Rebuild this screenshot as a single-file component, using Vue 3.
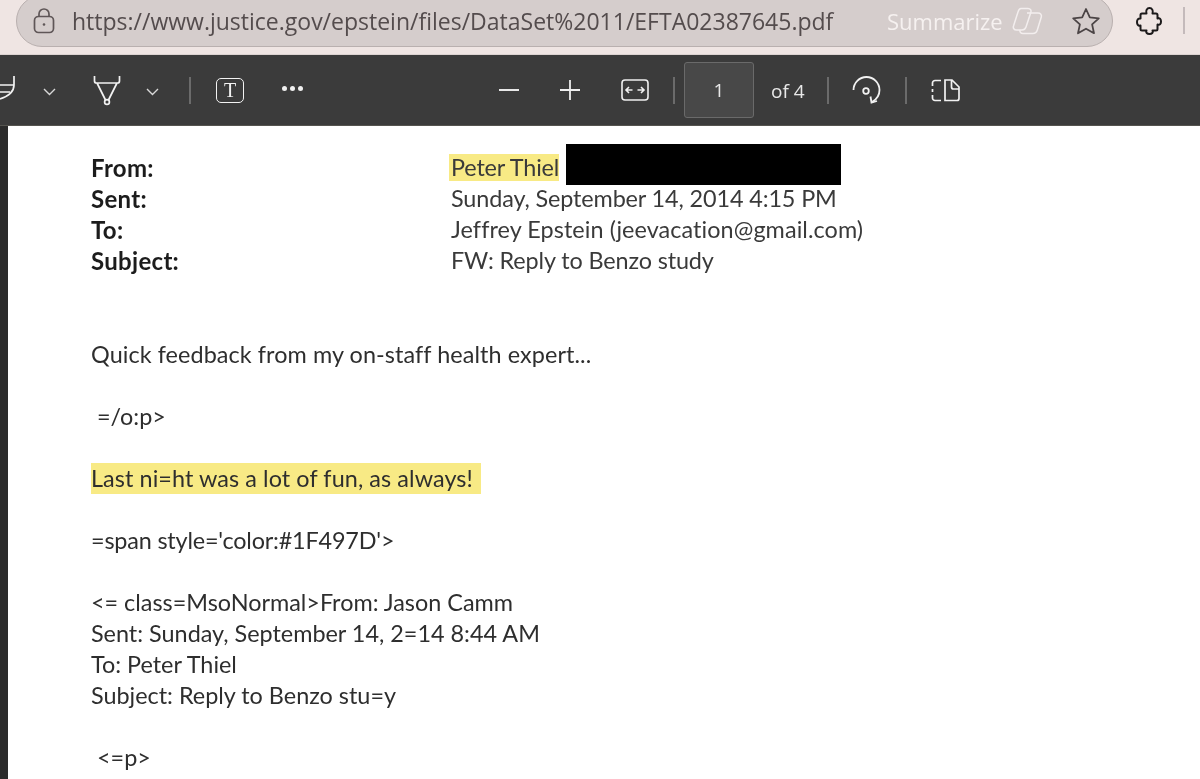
<template>
  <div class="page">
    <header class="browser-bar">
      <div class="address-pill">
        <svg class="lock" width="22" height="26" viewBox="0 0 22 26" fill="none" stroke="#5f5657" stroke-width="1.7">
          <rect x="1.5" y="8.5" width="19" height="16" rx="4" />
          <path d="M6 8.5V6a5 5 0 0 1 10 0v2.500" />
          <circle cx="11" cy="16.500" r="1.300" fill="#5f5657" stroke="none" />
        </svg>
        <span class="url">https://www.justice.gov/epstein/files/DataSet%2011/EFTA02387645.pdf</span>
        <span class="summarize">Summarize</span>
        <svg class="copilot" width="31" height="28" viewBox="0 0 31 28" fill="none" stroke="#f3eeee" stroke-width="1.500" stroke-linejoin="round">
          <path d="M9 1.500h7c2.500 0 3.500 1.800 2.800 4L14 20c-.7 2-2 3-4 3H4.500C2 23 .8 21 1.500 19L6 5c.6-2 1.500-3.500 3-3.500z" />
          <path d="M15 6h11c2.500 0 4 1.800 3.300 4l-4 13c-.7 2.500-2.200 3.500-4.500 3.500H11c-2.200 0-3.500-1.500-3-3.500" />
        </svg>
        <svg class="star" width="30" height="28" viewBox="0 0 30 28" fill="none" stroke="#4b4445" stroke-width="1.800" stroke-linejoin="round">
          <path d="M15 2l3.800 8.300 9 1-6.700 6.100 1.900 8.800L15 21.700l-8 4.500 1.900-8.800L2.200 11.300l9-1z" />
        </svg>
      </div>
      <svg class="puzzle" width="26" height="28" viewBox="0 0 26 28" fill="none" stroke="#1c1a1b" stroke-width="2" stroke-linejoin="round">
        <path d="M6 6.500h4.500c-1-3 .5-5.500 3-5.500s4 2.500 3 5.500H20a1.500 1.500 0 0 1 1.500 1.500v3.500c2.500-1 3.500 1 3.500 3s-1 4-3.500 3V22a1.500 1.500 0 0 1-1.500 1.500h-3.500c1 2-.5 3.500-3 3.500s-4-1.500-3-3.500H6A1.500 1.500 0 0 1 4.500 22v-3.500C2 19.500 1 17 1 15s1-4 3.500-3.500V8A1.500 1.500 0 0 1 6 6.500z" />
      </svg>
      <div class="bar-sep" />
    </header>

    <nav class="pdf-toolbar">
      <svg class="draw" width="15" height="30" viewBox="0 0 15 30" fill="none" stroke="#f2f2f2" stroke-width="1.700">
        <path d="M14 1v9c0 7-5 11-14 14M0 10h14M0 17h10" />
      </svg>
      <svg class="chev chev-a" width="13" height="8" viewBox="0 0 13 8" fill="none" stroke="#d8d8d8" stroke-width="1.400"><path d="M1 1l5.500 5.500L12 1" /></svg>
      <svg class="marker" width="28" height="30" viewBox="0 0 28 30" fill="none" stroke="#f2f2f2" stroke-width="1.700" stroke-linejoin="round">
        <path d="M1.500 0v5q0 2 2 2h21q2 0 2-2V0M4 7l8.500 17M24 7l-8.500 17" />
        <circle cx="14" cy="26" r="2.400" />
      </svg>
      <svg class="chev chev-b" width="13" height="8" viewBox="0 0 13 8" fill="none" stroke="#d8d8d8" stroke-width="1.400"><path d="M1 1l5.500 5.500L12 1" /></svg>
      <div class="tool-sep sep-a" />
      <div class="text-tool"><span>T</span></div>
      <div class="dots"><i /><i /><i /></div>
      <svg class="minus" width="20" height="2" viewBox="0 0 20 2"><rect width="20" height="2" fill="#e8e8e8" /></svg>
      <svg class="plus" width="20" height="20" viewBox="0 0 20 20" fill="none" stroke="#f0f0f0" stroke-width="1.800"><path d="M10 0v20M0 10h20" /></svg>
      <svg class="fit" width="28" height="22" viewBox="0 0 28 22" fill="none" stroke="#f0f0f0" stroke-width="1.600">
        <rect x="1" y="1" width="26" height="20" rx="3" />
        <path d="M5.500 11h6M8 8l-3 3 3 3M16.500 11h6M20 8l3 3-3 3" />
      </svg>
      <div class="tool-sep sep-b" />
      <div class="page-box">1</div>
      <span class="page-total">of 4</span>
      <div class="tool-sep sep-c" />
      <svg class="rotate" width="30" height="30" viewBox="0 0 30 30" fill="none" stroke="#f2f2f2" stroke-width="1.800">
        <path d="M1.500 13A13 13 0 0 1 27.500 13c0 5-3 9.500-7.500 12" />
        <path d="M25 24l-5.500 1.500-1-6" />
        <circle cx="14" cy="14" r="2.800" />
      </svg>
      <div class="tool-sep sep-d" />
      <svg class="split" width="29" height="23" viewBox="0 0 29 23" fill="none" stroke="#f2f2f2" stroke-width="1.700">
        <path d="M10 1.500H4A2.500 2.500 0 0 0 1.500 4v3M1.500 10v3M1.500 16v3A2.500 2.500 0 0 0 4 21.500h6" />
        <path d="M14 1h7l7 7v11.500a2 2 0 0 1-2 2H14zM20.500 1v7a2 2 0 0 0 2 2H28" />
      </svg>
    </nav>

    <main class="doc-area">
      <div class="sheet">
        <div v-for="row in headers" :key="row.label" class="mail-row">
          <b class="mail-label">{{ row.label }}</b>
          <span v-if="row.label === 'From:'" class="mail-value">
            <mark class="name-mark">{{ row.value }}</mark>
            <span class="redaction" />
          </span>
          <span v-else class="mail-value" :style="{ letterSpacing: row.spacing }">{{ row.value }}</span>
        </div>

        <div class="body-text">
          <p class="wide">Quick feedback from my on-staff health expert...</p>
          <p class="indent">=/o:p&gt;</p>
          <p class="wide"><mark class="line-mark">Last ni=ht was a lot of fun, as always!</mark></p>
          <p class="narrow">=span style='color:#1F497D'&gt;</p>
          <p>&lt;= class=MsoNormal&gt;From: Jason Camm<br />Sent: Sunday, September 14, 2=14 8:44 AM<br />To: Peter Thiel<br />Subject: Reply to Benzo stu=y</p>
          <p class="indent">&lt;=p&gt;</p>
        </div>
      </div>
    </main>
  </div>
</template>

<script setup>
const headers = [
  { label: 'From:', value: 'Peter Thiel' },
  { label: 'Sent:', value: 'Sunday, September 14, 2014 4:15 PM', spacing: '-0.12px' },
  { label: 'To:', value: 'Jeffrey Epstein (jeevacation@gmail.com)', spacing: '0.08px' },
  { label: 'Subject:', value: 'FW: Reply to Benzo study', spacing: '-0.12px' }
]
</script>

<style>
html, body { margin: 0; height: 100%; overflow: hidden; background: #fff; }
</style>

<style scoped>
.page { width: 1200px; height: 779px; overflow: hidden; filter: blur(0.45px); font-family: "Lato", "Noto Sans", sans-serif; }

.browser-bar { height: 55px; background: #efe5e3; display: flex; align-items: flex-start; padding-left: 16px; box-sizing: border-box; border-bottom: 1px solid #dcd3d1; }
.address-pill {
  width: 1097px; height: 52px; margin-top: -5px; background: #d5cdcc; border: 1px solid #b9b0af; box-sizing: border-box;
  border-radius: 26px; display: flex; align-items: center;
}
.lock { margin-left: 16px; flex-shrink: 0; }
.url { margin-left: 17px; font-family: "Open Sans", sans-serif; font-size: 23px; color: #544c4d; white-space: nowrap; width: 760px; flex-shrink: 0; }
.summarize { margin-left: 55px; font-family: "Open Sans", sans-serif; font-size: 22px; color: #f6f1f0; white-space: nowrap; width: 117px; flex-shrink: 0; }
.copilot { margin-left: 8px; flex-shrink: 0; }
.star { margin-left: 28px; flex-shrink: 0; }
.puzzle { margin: 7px 0 0 23px; flex-shrink: 0; }
.bar-sep { width: 2px; height: 27px; background: #c4babb; margin: 7px 0 0 21px; }

.pdf-toolbar { height: 71px; background: #3b3b3b; display: flex; align-items: center; box-sizing: border-box; color: #eee; border-bottom: 1px solid #55544f; }
.pdf-toolbar svg { flex-shrink: 0; overflow: visible; }
.chev-a { margin-left: 28px; margin-top: 3px; }
.marker { margin-left: 37px; margin-top: 2px; }
.chev-b { margin-left: 25px; margin-top: 3px; }
.tool-sep { width: 2px; height: 27px; background: #6b6b6b; flex-shrink: 0; }
.sep-a { margin-left: 30px; }
.text-tool { margin-left: 25px; width: 28px; height: 25px; box-sizing: border-box; border: 1.6px solid #f2f2f2; border-radius: 5px; display: flex; align-items: center; justify-content: center; font-family: "Liberation Serif", serif; font-size: 20px; line-height: 1; color: #f2f2f2; }
.dots { margin-left: 38px; margin-top: -3px; display: flex; gap: 3px; }
.dots i { width: 5px; height: 5px; border-radius: 50%; background: #f0f0f0; display: block; }
.minus { margin-left: 196px; }
.plus { margin-left: 41px; }
.fit { margin-left: 41px; }
.sep-b { margin-left: 24px; }
.page-box { margin-left: 9px; width: 70px; height: 56px; box-sizing: border-box; background: #484848; border: 1.500px solid #6a6a6a; border-radius: 3px; display: flex; align-items: center; justify-content: center; font-family: "Open Sans", sans-serif; font-size: 19px; color: #e8e8e8; flex-shrink: 0; }
.page-total { margin-left: 17px; width: 38px; font-family: "Open Sans", sans-serif; font-size: 19px; color: #e8e8e8; white-space: nowrap; flex-shrink: 0; margin-top: 1px; }
.sep-c { margin-left: 18px; }
.rotate { margin-left: 23px; margin-top: 4px; }
.sep-d { margin-left: 23px; }
.split { margin-left: 24px; }

.doc-area { background: #2b2b2b; height: 653px; padding-left: 8px; }
.sheet { background: #fff; height: 100%; box-sizing: border-box; padding: 26px 0 0 83px; color: #2e2e2e; font-size: 23.400px; line-height: 31px; }
.mail-row { display: flex; height: 31px; white-space: nowrap; }
.mail-label { width: 360px; font-weight: 700; font-size: 24px; letter-spacing: 0.3px; color: #1c1c1c; flex-shrink: 0; }
.mail-value { display: flex; align-items: center; color: #3a3a3a; }
.name-mark { background: #f8ea85; color: #3a3a3a; padding: 0 0 0 2px; margin-left: -2px; height: 27px; line-height: 27px; letter-spacing: -0.15px; }
.redaction { width: 275px; height: 41px; background: #000; margin-left: 7px; margin-top: -6px; }

.body-text { margin-top: 63px; }
.body-text p { margin: 0 0 31px; }
.indent { padding-left: 6px; }
.wide { letter-spacing: 0.08px; }
.narrow { letter-spacing: -0.18px; }
.line-mark { background: #f8ea85; color: #2e2e2e; padding: 0 8px 0 0; display: inline-block; }
</style>
